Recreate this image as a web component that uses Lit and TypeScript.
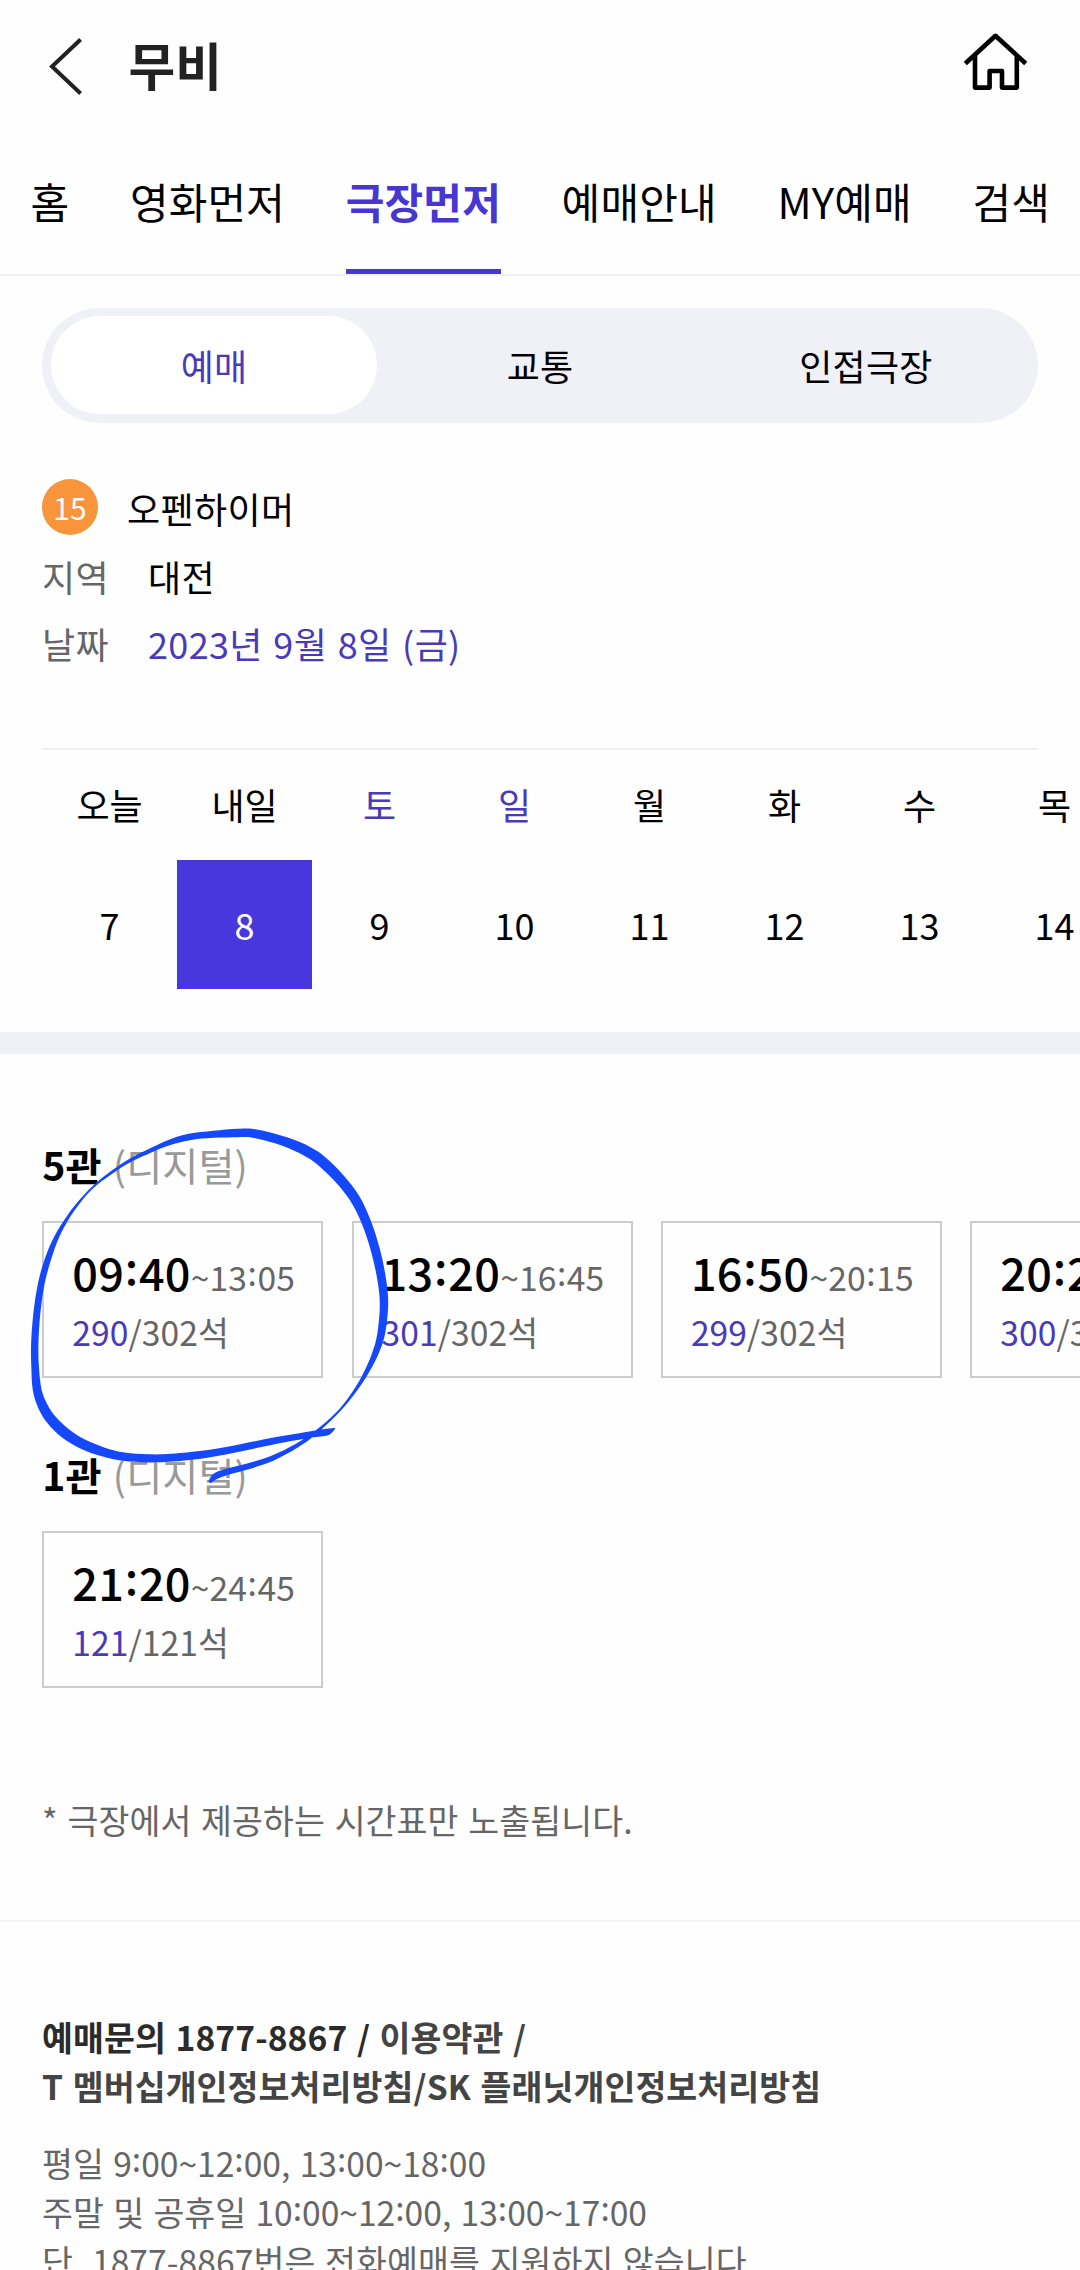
import { LitElement, html, css, svg } from "lit";
import { customElement, property } from "lit/decorators.js";
import { classMap } from "lit/directives/class-map.js";

interface Show {
  start: string;
  end: string;
  left: string;
  total: string;
}

const TABS = ["홈", "영화먼저", "극장먼저", "예매안내", "MY예매", "검색"];
const SEGMENTS = ["예매", "교통", "인접극장"];
const DAYS: [string, string][] = [
  ["오늘", "7"],
  ["내일", "8"],
  ["토", "9"],
  ["일", "10"],
  ["월", "11"],
  ["화", "12"],
  ["수", "13"],
  ["목", "14"],
];
const HALLS: { name: string; shows: Show[] }[] = [
  {
    name: "5관",
    shows: [
      { start: "09:40", end: "13:05", left: "290", total: "302" },
      { start: "13:20", end: "16:45", left: "301", total: "302" },
      { start: "16:50", end: "20:15", left: "299", total: "302" },
      { start: "20:20", end: "23:45", left: "300", total: "302" },
    ],
  },
  {
    name: "1관",
    shows: [{ start: "21:20", end: "24:45", left: "121", total: "121" }],
  },
];

// Pen stroke samples: x, y, stroke width.
const PEN: [number, number, number][] = [
  [608, 1147, 8], [625, 1129, 18], [660, 1115, 18], [720, 1099, 17], [790, 1075, 15],
  [860, 1038, 12], [915, 999, 9], [975, 943, 6], [1020, 888, 8], [1058, 828, 12],
  [1088, 765, 17], [1107, 700, 21], [1115, 610, 23], [1107, 530, 24], [1090, 450, 25],
  [1065, 370, 26], [1030, 295, 28], [985, 235, 29], [930, 180, 30], [890, 153, 29],
  [850, 134, 28], [800, 116, 26], [735, 100, 25], [690, 99, 24], [620, 103, 20],
  [550, 111, 18], [490, 128, 15], [440, 150, 12], [380, 180, 10], [330, 213, 8],
  [280, 252, 6], [240, 294, 6], [200, 348, 9], [165, 410, 13], [140, 475, 17],
  [120, 550, 18], [107, 640, 19], [101, 730, 20], [102, 800, 21], [108, 870, 24],
  [125, 920, 27], [150, 960, 29], [190, 1000, 30], [240, 1032, 28], [300, 1056, 26],
  [360, 1070, 24], [430, 1075, 23], [500, 1073, 22], [600, 1062, 21], [700, 1043, 20],
  [800, 1022, 19], [900, 1004, 18], [950, 996, 19], [973, 985, 2],
];

function penOutline(pts: [number, number, number][]): string {
  const a: [number, number][] = [];
  const b: [number, number][] = [];
  pts.forEach(([x, y, w], i) => {
    const p = pts[Math.max(0, i - 1)];
    const n = pts[Math.min(pts.length - 1, i + 1)];
    const dx = n[0] - p[0];
    const dy = n[1] - p[1];
    const l = Math.hypot(dx, dy) || 1;
    const h = w * 0.53;
    a.push([x - (dy / l) * h, y + (dx / l) * h]);
    b.push([x + (dy / l) * h, y - (dx / l) * h]);
  });
  const curve = (c: [number, number][]) => {
    let d = "";
    for (let i = 0; i < c.length - 1; i++) {
      const p0 = c[Math.max(0, i - 1)];
      const p1 = c[i];
      const p2 = c[i + 1];
      const p3 = c[Math.min(c.length - 1, i + 2)];
      const v = [
        p1[0] + (p2[0] - p0[0]) / 6, p1[1] + (p2[1] - p0[1]) / 6,
        p2[0] - (p3[0] - p1[0]) / 6, p2[1] - (p3[1] - p1[1]) / 6,
        p2[0], p2[1],
      ].map((n) => n.toFixed(1));
      d += `C${v.join(" ")}`;
    }
    return d;
  };
  b.reverse();
  return `M${a[0].join(" ")}${curve(a)}L${b[0].join(" ")}${curve(b)}Z`;
}

// Colons between digits sit at the middle of the digit height.
const clock = (text: string) =>
  text.split(":").map((part, i) => (i ? html`<span class="colon">:</span>${part}` : part));

const clockStyles = css`
  .colon {
    vertical-align: 0.135em;
    line-height: 0;
    margin: 0 0.012em;
  }
`;

@customElement("show-card")
export class ShowCard extends LitElement {
  @property({ attribute: false }) show!: Show;

  static styles = [
    clockStyles,
    css`
      :host {
        display: block;
        box-sizing: border-box;
        flex: none;
        width: 281px;
        height: 157px;
        border: 2px solid #ccc;
        padding: 18px 0 0 28px;
        color: #666;
        font-size: 33.6px;
        white-space: nowrap;
      }
      .time {
        height: 62px;
        line-height: 62px;
        font-size: 45px;
      }
      .start {
        color: #000;
        font-weight: 500;
        letter-spacing: 0.3px;
      }
      .end {
        font-size: 33.6px;
        line-height: 1;
        letter-spacing: 0.15px;
      }
      .seats {
        line-height: 58px;
        letter-spacing: 0.1px;
      }
      .left {
        color: #483ab8;
      }
    `,
  ];

  render() {
    const s = this.show;
    return html`<div class="time"><span class="start">${clock(s.start)}</span><span class="end">~${clock(s.end)}</span></div>
      <div class="seats"><span class="left">${s.left}</span>/${s.total}석</div>`;
  }
}

@customElement("app-root")
export class AppRoot extends LitElement {
  static styles = [
    clockStyles,
    css`
      :host {
        display: block;
        position: relative;
        width: 1080px;
        height: 2270px;
        overflow: hidden;
        background: #fefefe;
        color: #000;
        font-family: "Noto Sans CJK KR", sans-serif;
        font-size: 36px;
      }
      .header {
        display: flex;
        align-items: center;
        height: 132px;
        box-sizing: border-box;
        padding: 0 48px 0 42px;
      }
      .icon {
        flex: none;
        display: block;
      }
      .title {
        flex: 1;
        margin: 0 0 4px 38.5px;
        font-size: 50.8px;
        line-height: 72px;
        font-weight: 700;
        color: #222;
      }
      .tabs {
        display: flex;
        justify-content: space-between;
        height: 142px;
        padding: 0 30px 0 30.5px;
        border-bottom: 2px solid #f1f1f1;
        font-size: 42px;
        letter-spacing: 0.15px;
      }
      .tab {
        display: flex;
        align-items: center;
        border-bottom: 5px solid transparent;
      }
      .tab.on {
        border-color: #4737d0;
        color: #4737d0;
        font-weight: 700;
      }
      .segments {
        display: flex;
        box-sizing: border-box;
        height: 115px;
        margin: 32px 42px 0;
        padding: 8px 9px 9px;
        border-radius: 58px;
        background: #f0f1f6;
        letter-spacing: 0.25px;
      }
      .segment {
        flex: 1;
        display: flex;
        align-items: center;
        justify-content: center;
        border-radius: 49px;
      }
      .segment.on {
        background: #fff;
        color: #483ab8;
      }
      .info {
        margin: 51.5px 42px 0;
        letter-spacing: 0.35px;
        word-spacing: 0.06em;
      }
      .row {
        display: flex;
        align-items: center;
        height: 67.5px;
      }
      .age {
        display: flex;
        align-items: center;
        justify-content: center;
        width: 56px;
        height: 56px;
        margin: 0 29px 2px 0;
        border-radius: 50%;
        background: #f7943c;
        color: #fff;
        font-size: 30px;
        letter-spacing: 0;
      }
      .label {
        width: 106px;
        color: #666;
      }
      .picked {
        color: #483ab8;
      }
      .days {
        display: flex;
        margin: 71px 42px 0;
        border-top: 2px solid #f1f1f1;
      }
      .day {
        flex: none;
        width: 135px;
        text-align: center;
      }
      .name {
        line-height: 108px;
        padding-bottom: 2px;
      }
      .num {
        line-height: 129px;
      }
      .weekend .name {
        color: #483ab8;
      }
      .on .num {
        background: #4737dc;
        color: #fff;
      }
      .band {
        height: 22px;
        margin-top: 43px;
        background: #f0f1f6;
      }
      .halls {
        display: flex;
        flex-direction: column;
        gap: 66px;
        padding: 80px 0 0 42.2px;
      }
      .hall {
        display: flex;
        flex-direction: column;
        gap: 27px;
      }
      .hall-name {
        font-size: 39.2px;
        line-height: 60px;
        color: #999;
        letter-spacing: 0.1px;
        word-spacing: 0.06em;
      }
      .strong {
        color: #000;
        font-weight: 700;
      }
      .shows {
        display: flex;
        gap: 28.35px;
      }
      .note {
        margin: 107px 0 75px;
        padding: 0 42px;
        font-size: 33.6px;
        line-height: 50px;
        letter-spacing: 0.1px;
        word-spacing: 0.06em;
        color: #666;
      }
      .footer {
        border-top: 2px solid #f1f1f1;
        padding: 90px 42px 0;
        font-size: 33.6px;
        line-height: 49px;
        letter-spacing: 0.1px;
        word-spacing: 0.055em;
        color: #666;
        white-space: nowrap;
      }
      .links {
        margin-bottom: 28px;
        color: #444;
        font-weight: 700;
      }
      .hours {
        letter-spacing: 0;
      }
      .hours .colon {
        margin: 0;
      }
      .tel {
        color: #2b2b2b;
      }
      .pen {
        position: absolute;
        left: 0;
        top: 1100px;
        pointer-events: none;
      }
    `,
  ];

  render() {
    return html`
      <header class="header">
        <svg class="icon" width="48" height="72" viewBox="42 30 48 72" fill="none" stroke="#222" stroke-width="4">
          <path d="M80.6 39.5 52 66.5l28.6 27" />
        </svg>
        <div class="title">무비</div>
        <svg class="icon" width="72" height="72" viewBox="960 30 72 72" fill="none" stroke="#000" stroke-width="4.6" stroke-linejoin="round">
          <path d="M965.3 63.5 995.5 35.8l30.2 27.7M975 55v32.6h14.6V71H1002v16.6h14.8V55" />
        </svg>
      </header>
      <nav class="tabs">
        ${TABS.map((t) => html`<div class=${classMap({ tab: true, on: t === "극장먼저" })}>${t}</div>`)}
      </nav>
      <div class="segments">
        ${SEGMENTS.map((t, i) => html`<div class=${classMap({ segment: true, on: i === 0 })}>${t}</div>`)}
      </div>
      <div class="info">
        <div class="row"><span class="age">15</span>오펜하이머</div>
        <div class="row"><span class="label">지역</span>대전</div>
        <div class="row"><span class="label">날짜</span><span class="picked">2023년 9월 8일 (금)</span></div>
      </div>
      <div class="days">
        ${DAYS.map(
          ([name, num], i) => html`<div class=${classMap({ day: true, on: i === 1, weekend: i === 2 || i === 3 })}>
            <div class="name">${name}</div>
            <div class="num">${num}</div>
          </div>`
        )}
      </div>
      <div class="band"></div>
      <div class="halls">
        ${HALLS.map(
          (h) => html`<section class="hall">
            <div class="hall-name"><span class="strong">${h.name}</span> (디지털)</div>
            <div class="shows">${h.shows.map((s) => html`<show-card .show=${s}></show-card>`)}</div>
          </section>`
        )}
      </div>
      <div class="note">* 극장에서 제공하는 시간표만 노출됩니다.</div>
      <footer class="footer">
        <div class="links">
          <div><span class="tel">예매문의 1877-8867 /</span> 이용약관 /</div>
          <div>T 멤버십개인정보처리방침/SK 플래닛개인정보처리방침</div>
        </div>
        <div class="hours">${clock("평일 9:00~12:00, 13:00~18:00")}</div>
        <div class="hours">${clock("주말 및 공휴일 10:00~12:00, 13:00~17:00")}</div>
        <div>단, 1877-8867번은 전화예매를 지원하지 않습니다.</div>
      </footer>
      <svg class="pen" width="540" height="420" viewBox="0 0 1568 1260" preserveAspectRatio="none">
        ${svg`<path d=${penOutline(PEN)} fill="#1548fa" />`}
      </svg>
    `;
  }
}
